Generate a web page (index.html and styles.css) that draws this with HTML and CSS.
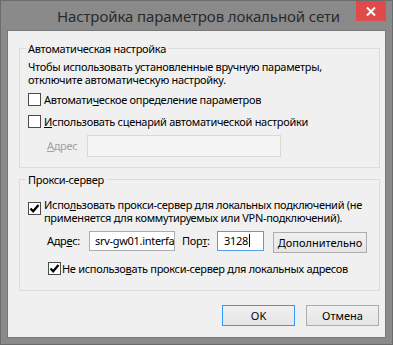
FILE: index.html
```html
<!DOCTYPE html>
<html lang="ru">
<head>
    <meta charset="UTF-8">
    <meta name="viewport" content="width=device-width, initial-scale=1.0">
    <title>Настройка параметров локальной сети</title>
    <link rel="stylesheet" href="styles.css">
</head>
<body>
    <div class="window">
        <div class="titlebar">
            <span class="title">Настройка параметров локальной сети</span>
            <span class="close">
                <svg width="10" height="9" viewBox="0 0 10 9"><path d="M1 0.5 L9 8.5 M9 0.5 L1 8.5" stroke="#fff" stroke-width="2"/></svg>
            </span>
        </div>
        <div class="client">
            <div class="group group-auto">
                <span class="legend">Автоматическая настройка</span>
                <p class="note">Чтобы использовать установленные вручную параметры,<br>отключите автоматическую настройку.</p>
                <div class="check check-first"><span class="box"></span><span>Автомати<u>ч</u>еское определение параметров</span></div>
                <div class="check check-second"><span class="box"></span><span><u>И</u>спользовать сценарий автоматической настройки</span></div>
                <div class="row row-script">
                    <span class="lbl lbl-off"><u>А</u>дрес</span>
                    <span class="field field-off"></span>
                </div>
            </div>
            <div class="group group-proxy">
                <span class="legend">Прокси-сервер</span>
                <div class="check check-multi">
                    <span class="box"><svg width="11" height="11" viewBox="0 0 11 11"><path d="M1.5 5.5 L4.2 8.3 L9.5 2" fill="none" stroke="#000" stroke-width="2.2"/></svg></span>
                    <span>Испо<u>л</u>ьзовать прокси-сервер для локальных подключений (не<br>применяется для коммутируемых или VPN-подключений).</span>
                </div>
                <div class="row row-proxy">
                    <span class="lbl lbl-host">Адр<u>е</u>с:</span>
                    <span class="field field-host">srv-gw01.interface.local</span>
                    <span class="lbl lbl-port">Пор<u>т</u>:</span>
                    <span class="field field-port">3128<span class="caret"></span></span>
                    <button class="btn btn-more"><u>Д</u>ополнительно</button>
                </div>
                <div class="check check-bypass">
                    <span class="box"><svg width="11" height="11" viewBox="0 0 11 11"><path d="M1.5 5.5 L4.2 8.3 L9.5 2" fill="none" stroke="#000" stroke-width="2.2"/></svg></span>
                    <span>Не использо<u>в</u>ать прокси-сервер для локальных адресов</span>
                </div>
            </div>
            <div class="actions">
                <button class="btn btn-default">OK</button>
                <button class="btn">Отмена</button>
            </div>
        </div>
    </div>
</body>
</html>
```

FILE: styles.css
```css
* { box-sizing: border-box; }
body { margin: 0; font-family: "Noto Sans", "DejaVu Sans", sans-serif; font-size: 11px; letter-spacing: -0.3px; color: #000; }
u { text-underline-offset: 1px; }

.window { width: 393px; height: 345px; background: #8a8a8a; border: 1px solid #6c6c6c; padding: 0 6px 6px; display: flex; flex-direction: column; }
.titlebar { height: 29px; margin: 0 -6px; display: flex; align-items: center; justify-content: center; position: relative; }
.title { font-size: 15px; letter-spacing: -0.1px; color: #2a2a2a; padding-left: 4px; }
.close { position: absolute; top: 0; right: 6px; width: 30px; height: 20px; background: #df4b4b; display: flex; align-items: center; justify-content: center; }

.client { flex: 1; background: #f0f0f0; border: 1px solid #777; display: flex; flex-direction: column; }

.group { border: 1px solid #dcdcdc; margin: 0 5px 0 11px; padding: 0 8px; white-space: nowrap; }
.group-auto { margin-top: 17px; padding-bottom: 10px; }
.group-proxy { margin-top: 11px; padding-bottom: 15px; }
.legend { display: block; width: fit-content; margin: -7px 0 0 -2px; padding: 0 2px; background: #f0f0f0; line-height: 13px; }

.note { margin: 5px 0 0; line-height: 13px; }

.check { display: flex; align-items: center; gap: 3px; line-height: 13px; }
.check-first { margin-top: 7px; }
.check-second { margin-top: 9px; }
.check-multi { align-items: flex-start; margin-top: 12px; }
.check-multi .box { margin-top: 4px; }
.check-bypass { margin-top: 9px; margin-left: 20px; gap: 1px; }
.box { width: 13px; height: 13px; flex: none; border: 1px solid #4a4a4a; background: #fff; display: flex; align-items: center; justify-content: center; }

.row { display: flex; align-items: center; }
.row-script { margin-top: 7px; padding-left: 19px; }
.row-proxy { margin-top: 7px; padding-left: 19px; align-items: flex-start; }
.lbl { flex: none; line-height: 20px; }
.lbl-off { width: 40px; color: #a0a0a0; line-height: 22px; }
.lbl-host { width: 42px; }
.lbl-port { width: 35px; margin-left: 7px; }

.field { display: block; flex: none; height: 20px; line-height: 18px; background: #fff; border: 1px solid #abadb3; white-space: nowrap; overflow: hidden; }
.field-off { width: 194px; height: 22px; background: #f4f4f4; border-color: #d9d9d9; }
.field-host { width: 86px; padding-left: 5px; }
.field-port { width: 47px; padding-left: 6px; border-color: #569de5; }
.caret { display: inline-block; width: 1px; height: 13px; background: #000; vertical-align: -2px; margin-left: 1px; }

.btn { font: inherit; color: #000; height: 21px; padding: 0; border: 1px solid #acacac; background: linear-gradient(#f0f0f0, #e5e5e5); }
.btn-more { width: 94px; margin-left: 9px; margin-top: 1px; }

.actions { display: flex; justify-content: flex-end; gap: 11px; margin: 14px 6px 0 0; }
.actions .btn { width: 73px; }
.btn-default { border-color: #3399ff; }
```
